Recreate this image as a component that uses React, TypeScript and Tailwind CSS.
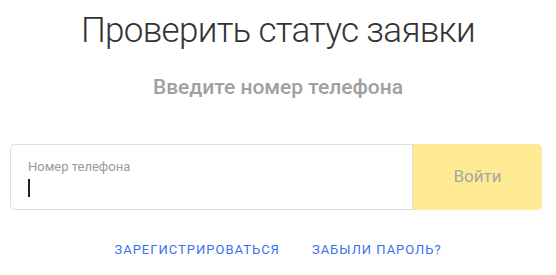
export default function App() {
  return (
    <div className="w-[556px] h-[275px] bg-white flex flex-col items-center" style={{ fontFamily: "Roboto, 'Noto Sans', sans-serif" }}>
      <h1 className="mt-[7px] text-[35px] leading-[48px] font-light text-[#333333] tracking-[-0.7px]" style={{ fontFamily: "Roboto, 'Open Sans', sans-serif" }}>
        Проверить статус заявки
      </h1>
      <p className="mt-[19px] text-[21px] leading-[26px] font-medium text-[#a0a0a0]">Введите номер телефона</p>
      <div className="mt-[44px] self-start ml-[10px] flex w-[532px] h-[66px]">
        <div className="flex-1 border border-[#dedede] border-r-0 rounded-l-[5px] pl-[17px] pt-[13px] flex flex-col">
          <span className="text-[13px] leading-[17px] text-[#9a9a9a]">Номер телефона</span>
          <span className="mt-[4px] w-[1.5px] h-[18px] bg-[#222222]" />
        </div>
        <div className="w-px bg-[#dedede]" />
        <button className="w-[129px] bg-[#ffeb93] rounded-r-[5px] text-[17px] text-[#a6a6a6] flex items-center justify-center">
          Войти
        </button>
      </div>
      <div className="mt-[32px] flex gap-[32px] text-[13px] leading-[16px] tracking-[1px] text-[#3a6ff0] uppercase">
        <a>Зарегистрироваться</a>
        <a>Забыли пароль?</a>
      </div>
    </div>
  );
}
